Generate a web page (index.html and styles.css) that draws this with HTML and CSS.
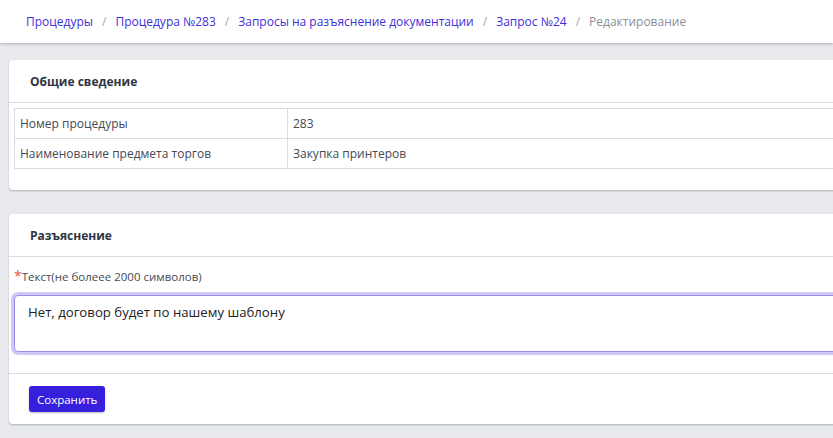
FILE: index.html
```html
<!DOCTYPE html>
<html lang="ru">
<head>
  <meta charset="UTF-8" />
  <title>Редактирование</title>
  <link rel="stylesheet" href="styles.css">
</head>
<body>
  <!-- Breadcrumbs -->
  <nav class="crumbs">
    <a href="#">Процедуры</a>
    <span class="sep">/</span>
    <a href="#">Процедура №283</a>
    <span class="sep">/</span>
    <a href="#">Запросы на разъяснение документации</a>
    <span class="sep">/</span>
    <a href="#">Запрос №24</a>
    <span class="sep">/</span>
    <span class="current">Редактирование</span>
  </nav>

  <main class="content">
    <!-- General info -->
    <section class="card">
      <h3 class="card-title">Общие сведение</h3>
      <div class="card-body info">
        <table class="info-table">
          <tr>
            <td class="key">Номер процедуры</td>
            <td>283</td>
          </tr>
          <tr>
            <td class="key">Наименование предмета торгов</td>
            <td>Закупка принтеров</td>
          </tr>
        </table>
      </div>
    </section>

    <!-- Answer form -->
    <section class="card">
      <h3 class="card-title">Разъяснение</h3>
      <form class="answer-form">
        <label class="field-label" for="answer"><span class="req">*</span>Текст(не болеее 2000 символов)</label>
        <textarea id="answer" class="answer-input">Нет, договор будет по нашему шаблону</textarea>
        <div class="form-actions">
          <button type="button" class="btn-primary">Сохранить</button>
        </div>
      </form>
    </section>
  </main>
</body>
</html>
```

FILE: styles.css
```css
/* Page */
html, body {
  margin: 0;
  padding: 0;
}

body {
  background: #e9eaed;
  font-family: "Open Sans", "Noto Sans", sans-serif;
  color: #333;
  width: 833px;
  height: 438px;
  overflow: hidden;
}

/* Breadcrumbs */
.crumbs {
  background: #fff;
  height: 43px;
  box-sizing: border-box;
  padding: 0 0 1px 26px;
  display: flex;
  align-items: center;
  gap: 9px;
  font-size: 12px;
  box-shadow: 0 1px 3px rgba(60, 70, 90, 0.35);
  white-space: nowrap;
}

.crumbs a {
  color: #3f2fd9;
  text-decoration: none;
}

.crumbs .sep {
  color: #a3a7b0;
}

.crumbs .current {
  color: #8b8f98;
}

/* Cards */
.content {
  padding: 17px 0 0 9px;
  width: 1000px;
}

.card {
  background: #fff;
  border-radius: 4px;
  box-shadow: 0 1px 2px rgba(60, 70, 90, 0.35);
  margin-bottom: 24px;
}

.card-title {
  margin: 0;
  height: 43px;
  box-sizing: border-box;
  padding: 0 0 0 21px;
  display: flex;
  align-items: center;
  font-size: 12px;
  font-weight: 700;
  color: #2f3444;
  border-bottom: 1px solid #dcdde3;
}

.info {
  padding: 5px 0 21px 5px;
}

.info-table {
  border-collapse: collapse;
  width: 100%;
  font-size: 12px;
  color: #454a55;
}

.info-table td {
  border: 1px solid #dcdde3;
  height: 29px;
  padding: 0 5px;
}

.info-table td.key {
  width: 262px;
}

/* Form */
.answer-form {
  padding-top: 9px;
}

.field-label {
  display: block;
  font-size: 11.5px;
  color: #454a55;
  padding-left: 5px;
  margin-bottom: 10px;
}

.req {
  color: #e0533f;
  font-size: 14px;
}

.answer-input {
  display: block;
  box-sizing: border-box;
  margin-left: 5px;
  width: 960px;
  height: 57px;
  border: 1px solid #9a8ded;
  border-radius: 4px;
  box-shadow: 0 0 0 3px #cfc9f6;
  padding: 7px 13px;
  font-family: "Open Sans", "Noto Sans", sans-serif;
  font-size: 13.2px;
  color: #222;
  resize: none;
  outline: none;
}

.form-actions {
  margin-top: 21px;
  border-top: 1px solid #dcdde3;
  padding: 12px 0 12px 20px;
}

.btn-primary {
  background: #3620de;
  color: #fff;
  border: none;
  border-radius: 3px;
  height: 26px;
  padding: 0 8px;
  font-family: "Open Sans", "Noto Sans", sans-serif;
  font-size: 11.5px;
  cursor: pointer;
  box-shadow: 0 1px 2px rgba(0, 0, 0, 0.25);
}
```
